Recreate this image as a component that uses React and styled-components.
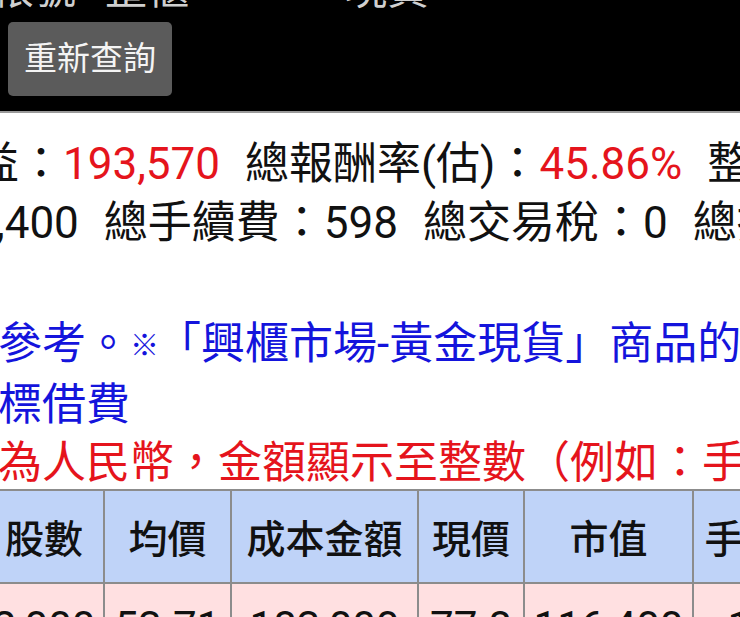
import React from 'react';
import styled, { createGlobalStyle } from 'styled-components';

const Global = createGlobalStyle`
  html, body { margin: 0; padding: 0; background: #fff; }
  body {
    width: 740px; height: 617px; overflow: hidden;
    font-family: Roboto, "Noto Sans CJK TC", sans-serif;
  }
`;

const Page = styled.div`
  width: 740px;
  height: 617px;
  overflow: hidden;
  display: flex;
  flex-direction: column;
`;

const TopBar = styled.header`
  background: #000;
  height: 111px;
  border-bottom: 2px solid #9a9a9a;
  overflow: hidden;
  display: flex;
  flex-direction: column;
  flex-shrink: 0;
`;

const TopLine = styled.div`
  height: 44px;
  margin-top: -32px;
  margin-left: -8px;
  font-size: 42px;
  line-height: 44px;
  color: #cfcfcf;
  white-space: nowrap;
`;

const ReloadButton = styled.button`
  margin: 10px 0 0 8px;
  width: 164px;
  height: 74px;
  padding: 0;
  border: none;
  border-radius: 5px;
  background: #5b5b5b;
  color: #f4f4f4;
  font-family: Roboto, "Noto Sans CJK TC", sans-serif;
  font-size: 33px;
  line-height: 74px;
  text-align: center;
`;

const Summary = styled.section`
  padding-top: 22px;
  font-size: 44px;
  line-height: 59px;
  color: #111;
`;

const Notes = styled.section`
  margin-top: 62px;
  font-size: 44px;
  line-height: 58.5px;
`;

const Line = styled.div`
  white-space: nowrap;
  margin-left: ${p => p.$shift || 0}px;
  color: ${p => p.$color || '#111'};
`;

const Red = styled.span`
  color: #e5141c;
`;

const Gap = styled.span`
  display: inline-block;
  width: ${p => p.$w ?? 25}px;
`;

const Mark = styled.span`
  display: inline-block;
  width: 27px;
  font-size: 29px;
  vertical-align: 3px;
`;

const Table = styled.table`
  border-collapse: collapse;
  table-layout: fixed;
  width: 851px;
  margin-left: -17px;
  margin-top: -4px;
  font-size: 39px;
  color: #111;
  flex-shrink: 0;
`;

const Th = styled.th`
  background: #bfd3f8;
  border: 2px solid #8c8c8c;
  height: 91px;
  padding: 0;
  font-weight: 500;
  text-align: center;
  white-space: nowrap;
  overflow: hidden;
`;

const Td = styled.td`
  background: #ffe0e1;
  border: 2px solid #8c8c8c;
  height: 72px;
  padding: 19px 0 0;
  vertical-align: top;
  line-height: 48px;
  text-align: center;
  white-space: nowrap;
  font-size: 42px;
`;

const cols = [120, 127, 187, 106, 169, 140];
const heads = ['股數', '均價', '成本金額', '現價', '市值', '手續費'];
const values = ['2,000', '53.71', '183,000', '77.8', '116,400', '166'];

export default function App() {
  return (
    <Page>
      <Global />
      <TopBar>
        <TopLine>
          帳號<Gap $w={29} />整櫃．．<Gap $w={72} />現貨
        </TopLine>
        <ReloadButton>重新查詢</ReloadButton>
      </TopBar>
      <Summary>
        <Line $shift={-25}>
          益：<Red>193,570</Red><Gap />總報酬率(估)：<Red>45.86%</Red><Gap />整體
        </Line>
        <Line $shift={-4}>
          ,400<Gap />總手續費：598<Gap />總交易稅：0<Gap />總損
        </Line>
      </Summary>
      <Notes>
        <Line $shift={-2} $color="#1414dc">
          參考。<Mark>※</Mark>「興櫃市場-黃金現貨」商品的
        </Line>
        <Line $shift={-2} $color="#1414dc">標借費</Line>
        <Line $shift={-2} $color="#e5141c">為人民幣，金額顯示至整數（例如：手</Line>
      </Notes>
      <Table>
        <colgroup>
          {cols.map((w, i) => <col key={i} style={{ width: w }} />)}
        </colgroup>
        <thead>
          <tr>{heads.map(h => <Th key={h}>{h}</Th>)}</tr>
        </thead>
        <tbody>
          <tr>{values.map((v, i) => <Td key={i}>{v}</Td>)}</tr>
        </tbody>
      </Table>
    </Page>
  );
}
